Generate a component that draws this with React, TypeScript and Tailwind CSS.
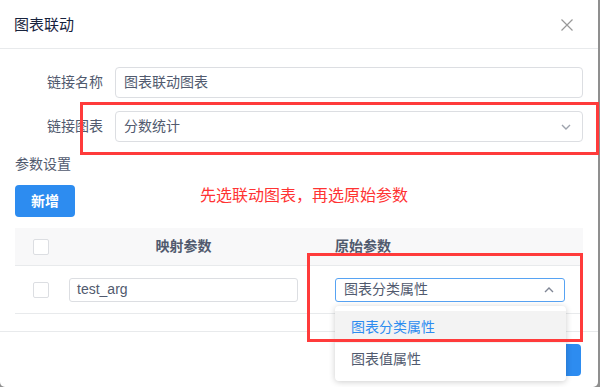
import React from "react";

const font = { fontFamily: '"Liberation Sans", "Noto Sans CJK SC", sans-serif' };

function Checkbox() {
  return <div className="w-[16px] h-[16px] border border-[#dcdee2] rounded-[2px] bg-white" />;
}

export default function App() {
  return (
    <div className="w-[600px] h-[387px] bg-[#8f8f8f] relative overflow-hidden" style={font}>
      <div className="w-[598px] h-[387px] bg-white rounded-b-[5px] flex flex-col">
        {/* Header */}
        <div className="h-[49px] border-b border-[#e8eaec] flex items-center justify-between pl-[14px] pr-[24px] shrink-0">
          <span className="text-[15px] text-[#17233d] leading-none mt-[1px]">图表联动</span>
          <svg width="14" height="14" viewBox="0 0 14 14" className="mt-[1px]">
            <path d="M1.5 1.5 L12.5 12.5 M12.5 1.5 L1.5 12.5" stroke="#999" strokeWidth="1.2" fill="none" />
          </svg>
        </div>
        {/* Body */}
        <div className="pl-[15px] pr-[15px] pt-[18px] flex flex-col">
          <div className="flex items-center h-[31px]">
            <div className="w-[100px] pr-[12px] text-right text-[14px] text-[#515a6e]">链接名称</div>
            <div className="flex-1 h-[31px] border border-[#dcdee2] rounded-[4px] px-[8px] flex items-center text-[14px] text-[#515a6e]">
              图表联动图表
            </div>
          </div>
          <div className="flex items-center h-[31px] mt-[13px]">
            <div className="w-[100px] pr-[12px] text-right text-[14px] text-[#515a6e]">链接图表</div>
            <div className="flex-1 h-[31px] border border-[#dcdee2] rounded-[4px] pl-[8px] pr-[11px] flex items-center justify-between text-[14px] text-[#515a6e]">
              <span>分数统计</span>
              <svg width="10" height="6" viewBox="0 0 10 6">
                <path d="M1 1 L5 5 L9 1" stroke="#9ea3ad" strokeWidth="1.4" fill="none" />
              </svg>
            </div>
          </div>
          <div className="mt-[12px] text-[14px] leading-[20px] text-[#515a6e]">参数设置</div>
          <div className="flex items-center mt-[11px]">
            <div className="w-[60px] h-[32px] rounded-[4px] bg-[#2d8cf0] text-white text-[14px] font-bold flex items-center justify-center">
              新增
            </div>
            <div className="ml-[125px] text-[16px] text-[#ff3333] -mt-[11px]">先选联动图表，再选原始参数</div>
          </div>
          {/* Table */}
          <div className="mt-[11px] w-[568px]">
            <div className="flex h-[38px] bg-[#f8f8f9] border-b border-[#e8eaec] items-center">
              <div className="w-[45px] pl-[18px] flex items-center">
                <Checkbox />
              </div>
              <div className="w-[247px] text-center text-[14px] font-bold text-[#515a6e]">映射参数</div>
              <div className="flex-1 pl-[28px] text-[14px] font-bold text-[#515a6e]">原始参数</div>
            </div>
            <div className="flex h-[48px] border-b border-[#e8eaec] items-center">
              <div className="w-[45px] pl-[18px] flex items-center">
                <Checkbox />
              </div>
              <div className="w-[247px] px-[9px]">
                <div className="h-[24px] border border-[#dcdee2] rounded-[3px] px-[7px] flex items-center text-[14px] text-[#515a6e]">
                  test_arg
                </div>
              </div>
              <div className="flex-1 pl-[28px]">
                <div className="w-[230px] h-[24px] border border-[#57a3f3] rounded-[3px] pl-[8px] pr-[10px] flex items-center justify-between text-[14px] text-[#515a6e]">
                  <span>图表分类属性</span>
                  <svg width="10" height="6" viewBox="0 0 10 6">
                    <path d="M1 5 L5 1 L9 5" stroke="#808695" strokeWidth="1.4" fill="none" />
                  </svg>
                </div>
              </div>
            </div>
          </div>
        </div>
        {/* Footer */}
        <div className="mt-[17px] border-t border-[#e8eaec] flex justify-end pr-[17px] pt-[12px] gap-[8px]">
          <div className="w-[60px] h-[32px] rounded-[4px] border border-[#dcdee2] text-[14px] text-[#515a6e] flex items-center justify-center">取消</div>
          <div className="w-[60px] h-[32px] rounded-[4px] bg-[#2d8cf0] text-white text-[14px] flex items-center justify-center">确定</div>
        </div>
      </div>

      {/* Dropdown */}
      <div className="absolute left-[335px] top-[306px] w-[231px] h-[75px] bg-white rounded-[4px] shadow-[0_1px_6px_rgba(0,0,0,0.2)] pt-[5px]">
        <div className="h-[32px] bg-[#f3f3f3] pl-[16px] flex items-center text-[14px] text-[#2d8cf0]">图表分类属性</div>
        <div className="h-[32px] pl-[16px] flex items-center text-[14px] text-[#515a6e]">图表值属性</div>
      </div>

      {/* Annotation boxes */}
      <div className="absolute left-[80px] top-[102px] w-[519px] h-[53px] border-[3px] border-[#ff3b3b]" />
      <div className="absolute left-[307px] top-[253px] w-[276px] h-[89px] border-[3px] border-[#ff3b3b]" />
    </div>
  );
}
